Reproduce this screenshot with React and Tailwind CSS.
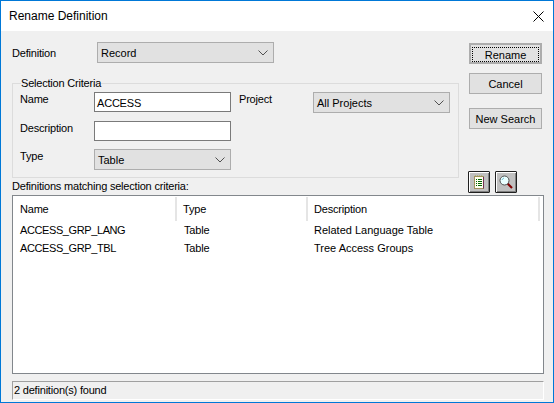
import React from "react";

function Chevron() {
  return (
    <svg width="10" height="6" viewBox="0 0 10 6" className="shrink-0">
      <path d="M0.5 0.5 L5 5 L9.5 0.5" fill="none" stroke="#505050" strokeWidth="1" />
    </svg>
  );
}

function Select({ value, className }) {
  return (
    <div className={"flex items-center justify-between border border-[#adadad] bg-[#e1e1e1] pl-[3px] pr-[5px] tracking-normal " + className}>
      <span className="pt-[2px]">{value}</span>
      <Chevron />
    </div>
  );
}

function Btn({ children, className = "" }) {
  return (
    <div className={"flex h-[21px] w-[73px] items-center justify-center border border-[#adadad] bg-[#e1e1e1] pt-[2px] tracking-normal " + className}>
      {children}
    </div>
  );
}

function IconBtn({ children }) {
  return (
    <div className="flex h-[22px] w-[22px] items-center justify-center border border-[#202020] rounded-[1px] bg-[#c0c0c0] shadow-[inset_1px_1px_0_#fff,inset_-1px_-1px_0_#808080]">
      {children}
    </div>
  );
}

const rows = [
  ["ACCESS_GRP_LANG", "Table", "Related Language Table"],
  ["ACCESS_GRP_TBL", "Table", "Tree Access Groups"],
];

export default function App() {
  return (
    <div className="flex h-[403px] w-[554px] flex-col border border-[#0078d7] bg-[#f0f0f0] text-[11px] leading-[13px] tracking-[-0.2px] text-black [font-family:'Liberation_Sans',Arial,sans-serif]">
      <div className="flex h-[30px] items-center justify-between bg-white pl-[8px] pr-[9px]">
        <span className="text-[12px] tracking-normal">Rename Definition</span>
        <svg width="11" height="11" viewBox="0 0 11 11">
          <path d="M0.5 0.5 L10.5 10.5 M10.5 0.5 L0.5 10.5" stroke="#000" strokeWidth="1" fill="none" />
        </svg>
      </div>

      <div className="flex flex-1 flex-col px-[11px]">
        <div className="flex h-[164px]">
          <div className="flex w-[447px] flex-col">
            <div className="mt-[11px] flex items-center">
              <span className="w-[85px] pt-[2px]">Definition</span>
              <Select value="Record" className="h-[21px] w-[177px]" />
            </div>

            <fieldset className="mt-[14px] h-[101px] border border-[#dcdcdc] pl-[7px]">
              <legend className="ml-[1px] px-0 leading-[12px]">Selection Criteria</legend>
              <div className="mt-[3px] flex">
                <span className="w-[74px] pt-[1px]">Name</span>
                <div className="flex h-[20px] w-[137px] items-center border border-[#7a7a7a] bg-white pl-[2px]">
                  <span className="pt-[2px]">ACCESS</span>
                </div>
                <span className="ml-[8px] w-[74px] pt-[1px]">Project</span>
                <Select value="All Projects" className="h-[21px] w-[137px]" />
              </div>
              <div className="mt-[8px] flex">
                <span className="w-[74px] pt-[1px]">Description</span>
                <div className="h-[20px] w-[137px] border border-[#7a7a7a] bg-white"></div>
              </div>
              <div className="mt-[8px] flex">
                <span className="w-[74px] pt-[1px]">Type</span>
                <Select value="Table" className="h-[21px] w-[137px]" />
              </div>
            </fieldset>

            <div className="mt-[2px]">Definitions matching selection criteria:</div>
          </div>

          <div className="ml-[10px] flex flex-col">
            <Btn className="mt-[12px] border-2 border-[#0078d7] pt-0 shadow-[inset_0_0_0_1px_#e1e1e1]">
              <span className="flex h-[15px] w-[67px] items-center justify-center border border-dotted border-black pt-[2px]">Rename</span>
            </Btn>
            <Btn className="mt-[9px]">Cancel</Btn>
            <Btn className="mt-[14px]">New Search</Btn>
            <div className="mt-auto mb-[2px] -ml-[1px] flex gap-[5px]">
              <IconBtn>
                <svg width="12" height="14" viewBox="0 0 12 14">
                  <rect x="1.5" y="1.5" width="9" height="12" fill="#fffff0" stroke="#a09060" />
                  <path d="M10.5 2 V13.5" stroke="#703050" />
                  <path d="M2 1 H10" stroke="#a0a040" strokeDasharray="1 1" />
                  <path d="M3 4.5 H4 M5 4.5 H9 M3 6.5 H4 M5 6.5 H9 M3 8.5 H4 M5 8.5 H9 M3 10.5 H4 M5 10.5 H9" stroke="#006600" />
                </svg>
              </IconBtn>
              <IconBtn>
                <svg width="16" height="16" viewBox="0 0 16 16">
                  <path d="M9.5 9.5 L14 14" stroke="#800000" strokeWidth="2.2" />
                  <circle cx="6.5" cy="6.5" r="4.5" fill="#eaffff" stroke="#505050" />
                  <path d="M4 6 Q4.5 4.5 6 4" stroke="#70c0d8" fill="none" />
                </svg>
              </IconBtn>
            </div>
          </div>
        </div>

        <div className="h-[179px] w-[532px] border border-[#82878c] bg-white">
          <div className="flex h-[25px] pt-[1px]">
            <div className="w-[164px] border-r-2 border-[#e5e5e5] pl-[7px] pt-[6px]">Name</div>
            <div className="w-[131px] border-r-2 border-[#e5e5e5] pl-[6px] pt-[6px]">Type</div>
            <div className="w-[232px] border-r-2 border-[#e5e5e5] pl-[6px] pt-[6px]">Description</div>
          </div>
          <div>
            {rows.map((r) => (
              <div key={r[0]} className="flex h-[18px] items-center">
                <div className="w-[164px] pl-[7px] tracking-[-0.4px]">{r[0]}</div>
                <div className="w-[131px] pl-[7px]">{r[1]}</div>
                <div className="pl-[6px] tracking-normal">{r[2]}</div>
              </div>
            ))}
          </div>
        </div>

        <div className="mt-[7px] flex h-[19px] w-[532px] items-center border border-[#a0a0a0] border-r-white border-b-white pl-[1px]">
          2 definition(s) found
        </div>
      </div>
    </div>
  );
}
